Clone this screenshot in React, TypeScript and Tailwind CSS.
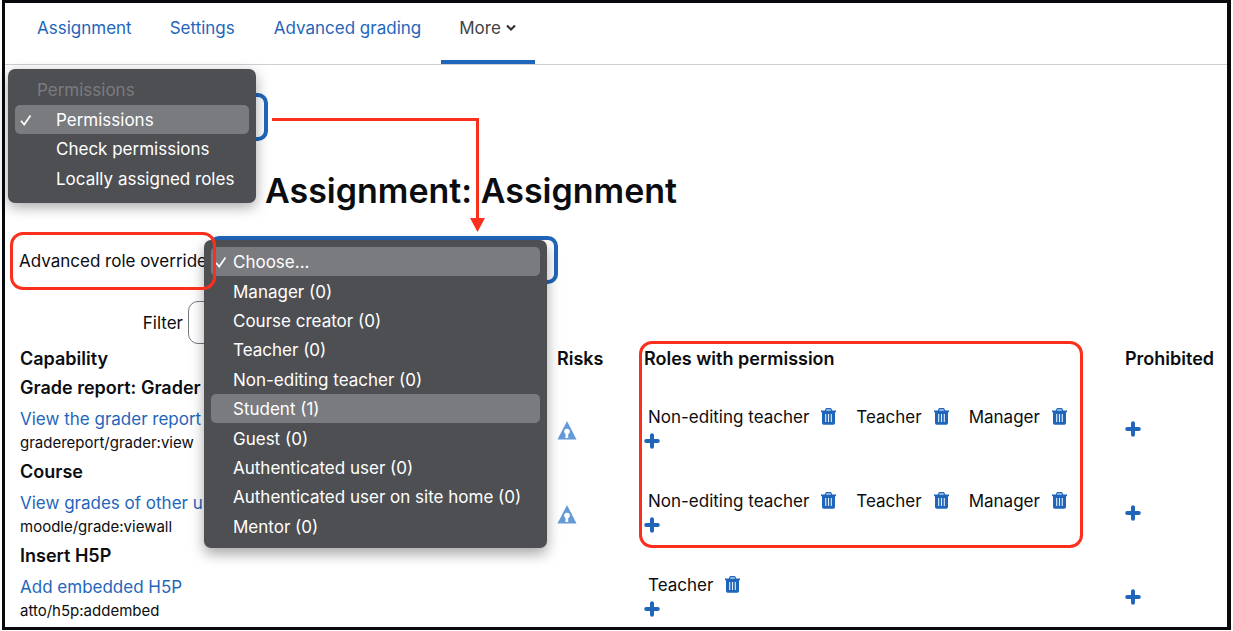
import type { ReactNode } from "react";

type Capability = {
  group: string;
  title: string;
  code: string;
  risk: boolean;
  roles: string[];
};

const capabilities: Capability[] = [
  {
    group: "Grade report: Grader",
    title: "View the grader report",
    code: "gradereport/grader:view",
    risk: true,
    roles: ["Non-editing teacher", "Teacher", "Manager"],
  },
  {
    group: "Course",
    title: "View grades of other users",
    code: "moodle/grade:viewall",
    risk: true,
    roles: ["Non-editing teacher", "Teacher", "Manager"],
  },
  {
    group: "Insert H5P",
    title: "Add embedded H5P",
    code: "atto/h5p:addembed",
    risk: false,
    roles: ["Teacher"],
  },
];

const roleOptions = [
  "Choose...",
  "Manager (0)",
  "Course creator (0)",
  "Teacher (0)",
  "Non-editing teacher (0)",
  "Student (1)",
  "Guest (0)",
  "Authenticated user (0)",
  "Authenticated user on site home (0)",
  "Mentor (0)",
];

const pageOptions = ["Permissions", "Check permissions", "Locally assigned roles"];

function TrashIcon() {
  return (
    <svg width="15" height="17" viewBox="0 0 15 17" fill="none" aria-hidden="true">
      <path d="M4.2 3 5 1.300q.2-.5.800-.5h3.400q.6 0 .8.500L10.800 3" stroke="#1f66bb" strokeWidth="1.400" />
      <path d="M0 2.600h15v1.600h-1V15q0 1.700-1.700 1.700H2.700Q1 16.700 1 15V4.200H0z" fill="#1f66bb" />
      <path d="M4.700 6v8M7.500 6v8M10.300 6v8" stroke="#e3edf8" strokeWidth="1.100" />
    </svg>
  );
}

function PlusIcon() {
  return (
    <svg width="16" height="16" viewBox="0 0 16 16" aria-hidden="true">
      <path d="M8 2.200v11.600M2.200 8h11.600" stroke="#1f66bb" strokeWidth="4" strokeLinecap="round" />
    </svg>
  );
}

function RiskIcon() {
  return (
    <svg width="20" height="19" viewBox="0 0 20 19" role="img" aria-label="Privacy risk">
      <path d="M10 0 19.500 18.500H.5z" fill="#649ad8" />
      <circle cx="10" cy="10.500" r="2.800" fill="#fff" />
      <path d="M8.800 11h2.400v6H8.300z" fill="#fff" />
    </svg>
  );
}

function CheckIcon() {
  return (
    <svg width="12" height="12" viewBox="0 0 12 12" fill="none" aria-hidden="true">
      <path d="M1 6.800 4.200 10.500 10.500 1.500" stroke="#fff" strokeWidth="1.700" />
    </svg>
  );
}

function MenuItem({ children, checked, active, wide }: { children: ReactNode; checked?: boolean; active?: boolean; wide?: boolean }) {
  return (
    <button
      type="button"
      role="option"
      aria-selected={!!checked}
      className={`flex items-center rounded-[5px] pt-px text-left whitespace-nowrap text-white ${active ? "bg-[#7a7b7f]" : ""}`}
    >
      <span className={`flex shrink-0 ${wide ? "w-[41px] pl-[5px]" : "w-[22px] pl-[4px]"}`}>{checked && <CheckIcon />}</span>
      {children}
    </button>
  );
}

export default function App() {
  return (
    <div className="bg-white px-[2px] font-['Inter','Liberation_Sans',sans-serif] text-[17px] leading-6 text-[#0c0d10]">
      <div className="relative border-[3px] border-r-4 border-[#08090d] pb-[2px]">
        <nav className="flex h-[62px] border-b border-[#cfcfd1] pl-[13px] text-[#1f66bb]">
          <a href="#assignment" className="px-[19px] pt-[13px]">Assignment</a>
          <a href="#settings" className="px-[19px] pt-[13px]">Settings</a>
          <a href="#grading" className="px-5 pt-[13px]">Advanced grading</a>
          <button type="button" className="flex items-start gap-1 border-b-4 border-[#1f66bb] px-[18px] pt-[13px] text-[#414347]">
            More
            <svg width="12" height="24" viewBox="0 0 12 24" fill="none" aria-hidden="true">
              <path d="m2 9.500 4 4 4-4" stroke="#303236" strokeWidth="2.200" />
            </svg>
          </button>
        </nav>

        <main className="px-[14px]">
          <div className="relative mt-7 w-[249px]">
            <select aria-label="Permissions page" className="block h-12 w-full appearance-none rounded-[10px] border-[4px] border-[#1f66bb] bg-white text-transparent">
              {pageOptions.map((o) => <option key={o}>{o}</option>)}
            </select>
            <div role="listbox" aria-label="Permissions page" className="absolute -top-6 -left-[11px] z-10 grid h-[134px] w-[248px] grid-rows-4 rounded-[7px] bg-[#4e4f53] px-[7px] pt-[6px] pb-[10px] shadow-[0_4px_14px_rgba(0,0,0,0.35)]">
              <span className="flex items-center pt-px pl-[22px] text-[#7a7b7f]">Permissions</span>
              {pageOptions.map((o, i) => (
                <MenuItem key={o} wide checked={i === 0} active={i === 0}>{o}</MenuItem>
              ))}
            </div>
          </div>

          <h1 className="mt-[30px] pl-[246px] text-[34px] leading-10 font-semibold">Assignment: Assignment</h1>

          <form className="mt-[25px]">
            <div className="flex items-center">
              <label htmlFor="role-override" className="w-[190px] pt-[2px] whitespace-nowrap">Advanced role override</label>
              <div className="relative w-[349px]">
                <select id="role-override" className="block h-12 w-full appearance-none rounded-[10px] border-[4px] border-[#1f66bb] bg-white text-transparent">
                  {roleOptions.map((o) => <option key={o}>{o}</option>)}
                </select>
                <div role="listbox" aria-label="Advanced role override" className="absolute top-1 -left-[5px] z-10 grid h-[308px] w-[343px] grid-rows-10 rounded-[7px] bg-[#4e4f53] px-[7px] py-[7px] shadow-[0_6px_14px_rgba(0,0,0,0.35)]">
                  {roleOptions.map((o, i) => (
                    <MenuItem key={o} checked={i === 0} active={i === 0 || i === 5}>{o}</MenuItem>
                  ))}
                </div>
              </div>
            </div>
            <div className="mt-[17px] flex items-center">
              <label htmlFor="filter" className="w-[164px] text-right">Filter</label>
              <input id="filter" type="text" className="ml-[5px] h-[43px] w-[280px] rounded-[10px] border border-[#77787c]" />
            </div>
          </form>
        </main>

        <table className="mt-px w-full table-fixed border-collapse text-left">
          <colgroup>
            <col className="w-[552px]" />
            <col className="w-[87px]" />
            <col />
            <col className="w-[102px]" />
          </colgroup>
          <thead>
            <tr className="h-7 text-[18px]">
              <th className="p-0 pl-[15px] font-semibold">Capability</th>
              <th className="p-0 font-semibold">Risks</th>
              <th className="p-0 font-semibold">Roles with permission</th>
              <th className="p-0 font-semibold">Prohibited</th>
            </tr>
          </thead>
          {capabilities.map((cap) => (
            <tbody key={cap.code}>
              <tr className="h-7 text-[18px]">
                <th colSpan={4} className="p-0 pt-[2px] pl-[15px] font-semibold">{cap.group}</th>
              </tr>
              <tr className="h-14">
                <td className="p-0 pt-[3px] pl-[15px]">
                  <a href="#capability" className="block text-[#1f66bb]">{cap.title}</a>
                  <span className="block text-[15px]">{cap.code}</span>
                </td>
                <td className="p-0 pt-[3px]">{cap.risk && <RiskIcon />}</td>
                <td className="p-0">
                  <div className="flex gap-5 pl-1 whitespace-nowrap">
                    {cap.roles.map((role) => (
                      <span key={role} className="flex items-center gap-3">
                        {role}
                        <button type="button" aria-label={`Remove ${role}`} className="pb-[2px]"><TrashIcon /></button>
                      </span>
                    ))}
                  </div>
                  <button type="button" aria-label="Allow role" className="flex h-6 items-center"><PlusIcon /></button>
                </td>
                <td className="p-0">
                  <button type="button" aria-label="Prohibit role" className="flex items-center"><PlusIcon /></button>
                </td>
              </tr>
            </tbody>
          ))}
        </table>

        {/* Callouts over the page */}
        <div className="pointer-events-none absolute top-[229px] left-[5px] z-20 h-[58px] w-[206px] rounded-[13px] border-[3px] border-[#fb301c]" />
        <div className="pointer-events-none absolute top-[338px] left-[634px] z-20 h-[207px] w-[444px] rounded-[13px] border-[3px] border-[#fb301c]" />
        <svg className="pointer-events-none absolute top-[113px] left-[267px] z-20" width="216" height="118" viewBox="0 0 216 118" fill="none" aria-hidden="true">
          <path d="M0 3.500h205.500V105" stroke="#fb301c" strokeWidth="3" />
          <path d="M198 102h15l-7.500 14z" fill="#fb301c" />
        </svg>
      </div>
    </div>
  );
}
